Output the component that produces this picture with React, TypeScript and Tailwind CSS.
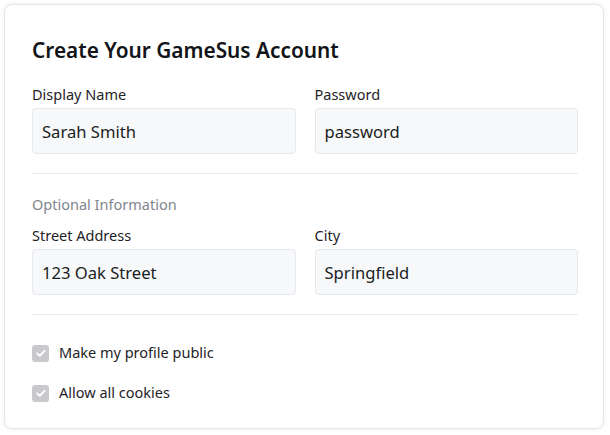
import React from 'react';

const Field: React.FC<{ label: string; value: string }> = ({ label, value }) => (
  <div className="flex flex-col">
    <label className="text-[14.5px] leading-5 text-[#1f2328] mb-[4px]">{label}</label>
    <div className="h-[46px] flex items-center px-[9px] pt-[2px] rounded-[4px] border border-[#e6e8eb] bg-[#f7f8fa] text-[16.6px] text-[#1a1d21]">
      {value}
    </div>
  </div>
);

const Check: React.FC<{ label: string }> = ({ label }) => (
  <div className="flex items-center gap-[10px] h-5">
    <div className="w-[17px] h-[17px] rounded-[3px] bg-[#c8c9cc] flex items-center justify-center">
      <svg width="12" height="12" viewBox="0 0 12 12" fill="none">
        <path d="M2.2 6.3l2.5 2.5 5-5.2" stroke="#fff" strokeWidth="1.8" strokeLinecap="round" strokeLinejoin="round" />
      </svg>
    </div>
    <span className="text-[14.5px] text-[#1f2328]">{label}</span>
  </div>
);

export default function App() {
  return (
    <div className="w-[610px] h-[435px] bg-white p-1" style={{ fontFamily: '"Noto Sans", "Open Sans", sans-serif' }}>
      <div className="w-[600px] h-[425px] rounded-lg border border-[#e4e6ea] bg-white shadow-[0_0_4px_rgba(0,0,0,0.08)] pl-[27px] pr-[25px] pt-[31px]">
        <h1 className="text-[20.8px] leading-7 font-semibold text-[#111418] mb-[20px]">Create Your GameSus Account</h1>
        <div className="grid grid-cols-2 gap-x-[19px]">
          <Field label="Display Name" value="Sarah Smith" />
          <Field label="Password" value="password" />
        </div>
        <div className="h-px bg-[#e8eaed] mt-[19px] mb-[20px]" />
        <div className="text-[14.5px] leading-5 text-[#80868e] mb-[11px]">Optional Information</div>
        <div className="grid grid-cols-2 gap-x-[19px]">
          <Field label="Street Address" value="123 Oak Street" />
          <Field label="City" value="Springfield" />
        </div>
        <div className="h-px bg-[#e8eaed] mt-[19px] mb-[28px]" />
        <div className="flex flex-col gap-[20px]">
          <Check label="Make my profile public" />
          <Check label="Allow all cookies" />
        </div>
      </div>
    </div>
  );
}
